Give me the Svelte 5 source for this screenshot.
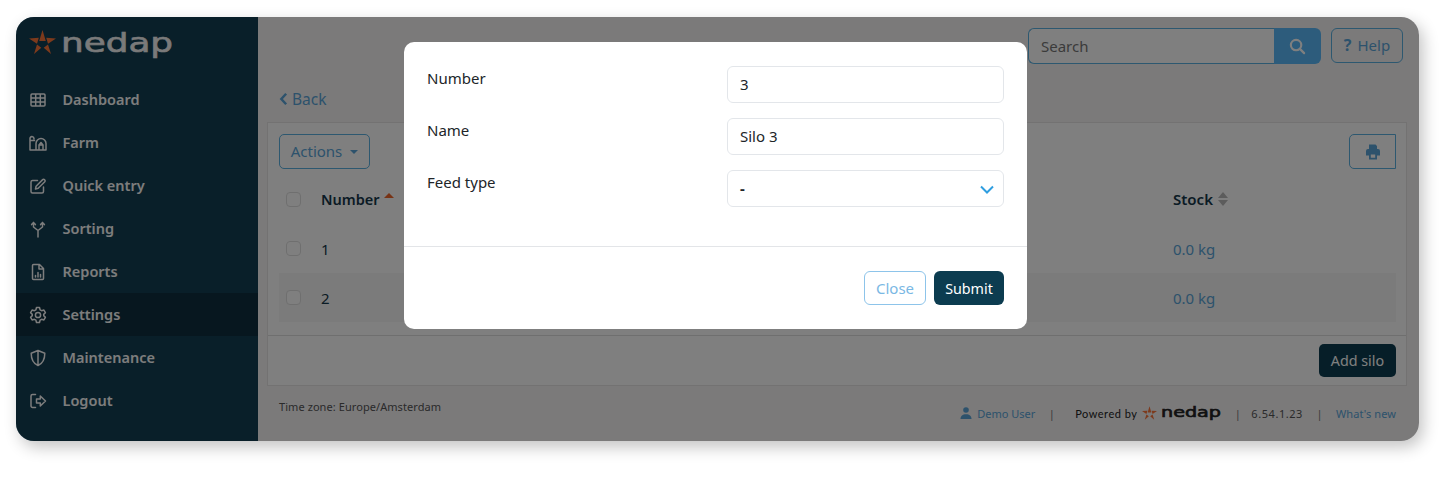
<script>
  const nav = [
    { label: 'Dashboard', d: 'M3 3h12a1 1 0 0 1 1 1v10a1 1 0 0 1-1 1H3a1 1 0 0 1-1-1V4a1 1 0 0 1 1-1zM2 7h14M2 11h14M6.700 3v12M11.300 3v12' },
    { label: 'Farm', d: 'M1 16V5a2.300 2.300 0 0 1 2-2.500A2.300 2.300 0 0 1 5 5M1 6.500h4.500M1 16h16V9.500a5 5 0 0 0-10 0V16M10 16v-5h4v5M10 11l2-2.500 2 2.500' },
    { label: 'Quick entry', d: 'M8.500 3.500H3.500A1.500 1.500 0 0 0 2 5v9.500A1.500 1.500 0 0 0 3.500 16H13a1.500 1.500 0 0 0 1.500-1.500V10M6.500 12l.6-2.800 6.600-6.600a1.200 1.200 0 0 1 1.700 0l.4.4a1.200 1.200 0 0 1 0 1.700l-6.600 6.600z' },
    { label: 'Sorting', d: 'M9 17v-6.500M9 10.500L4.500 7V2.500M9 10.500L13.500 7V2.500M2.600 4.600L4.500 2.500 6.400 4.600M11.600 4.600l1.900-2.100 1.900 2.100' },
    { label: 'Reports', d: 'M4.500 1.500h6l4 4v10a1 1 0 0 1-1 1h-9a1 1 0 0 1-1-1v-13a1 1 0 0 1 1-1zM10 1.500v4.500h4.500M6.500 14v-1.500M9 14v-4.500M11.500 14v-2.500' },
    { label: 'Settings', active: true, d: 'M7.500 1.500h3l.6 2.300 1.500.9 2.300-.6 1.500 2.600-1.700 1.700v1.200l1.700 1.700-1.500 2.600-2.300-.6-1.500.9-.6 2.300h-3l-.6-2.300-1.500-.9-2.300.6-1.500-2.600 1.700-1.700V8.400L1.600 6.700l1.500-2.600 2.300.6 1.500-.9zM9 6.400a2.600 2.600 0 1 0 0 5.200 2.600 2.600 0 0 0 0-5.200z' },
    { label: 'Maintenance', d: 'M9 1.500l6.800 2.700c0 6.300-2.200 10.300-6.800 12.300C4.400 14.500 2.200 10.500 2.200 4.200zM9 1.500v15' },
    { label: 'Logout', d: 'M6.500 2.500H3.500A1.500 1.500 0 0 0 2 4v10a1.500 1.500 0 0 0 1.500 1.500h3M7.500 7h3.800V4l5.200 5-5.200 5v-3H7.500z' }
  ];
  const star = 'M13.500 0L16.800 11H10.200zM0 8.500L9.800 7.800 8 13.800zM27 8.500L17.200 7.800 19 13.800zM5 24L8 14.500 12.300 17.700zM22 24L19 14.500 14.700 17.700z';
</script>

<div class="shell">
  <aside class="sidebar">
    <div class="brand">
      <svg class="star" viewBox="0 0 27 24" aria-hidden="true"><path d={star} /></svg>
      <svg class="word" viewBox="0 0 112 28" aria-hidden="true"><text x="0" y="21" textLength="112" lengthAdjust="spacingAndGlyphs">nedap</text></svg>
    </div>
    <nav class="menu">
      {#each nav as item}
        <div class="item" class:active={item.active}>
          <svg viewBox="0 0 18 18" class="ico" aria-hidden="true"><path d={item.d} /></svg>
          <span>{item.label}</span>
        </div>
      {/each}
    </nav>
  </aside>

  <main class="main">
    <header class="top">
      <div class="search">
        <div class="search-input">Search</div>
        <div class="search-btn">
          <svg viewBox="0 0 18 18" aria-hidden="true"><circle cx="7.500" cy="7.500" r="5.500" /><path d="M11.500 11.500L16 16" /></svg>
        </div>
      </div>
      <div class="help"><b>?</b><span>Help</span></div>
    </header>

    <div class="back">
      <svg viewBox="0 0 10 16" aria-hidden="true"><path d="M8 2L2.500 8 8 14" /></svg>
      <span>Back</span>
    </div>

    <section class="card">
      <div class="tools">
        <div class="actions">Actions <i class="caret"></i></div>
        <div class="print">
          <svg viewBox="0 0 16 16" aria-hidden="true"><path d="M4 0.500h6.500L12 2V5H4zM1 7a2 2 0 0 1 2-2h10a2 2 0 0 1 2 2v4.500h-3V15.500H4v-4H1zM5.800 10.500v3.200h4.400v-3.200z" fill-rule="evenodd" /></svg>
        </div>
      </div>
      <div class="table">
        <div class="row head">
          <i class="check"></i>
          <span class="num">Number <i class="sort-up"></i></span>
          <span class="stock">Stock <span class="sort-both"><i></i><i></i></span></span>
        </div>
        <div class="row body">
          <i class="check"></i>
          <span>1</span>
          <span class="link">0.0 kg</span>
        </div>
        <div class="row body striped">
          <i class="check"></i>
          <span>2</span>
          <span class="link">0.0 kg</span>
        </div>
      </div>
      <div class="card-foot"><div class="add">Add silo</div></div>
    </section>

    <footer class="foot">
      <span class="tz">Time zone: Europe/Amsterdam</span>
      <div class="meta">
        <svg class="user" viewBox="0 0 12 12" aria-hidden="true"><circle cx="6" cy="3" r="2.800" /><path d="M0.500 12c0-3 2-4.800 5.500-4.800s5.500 1.800 5.500 4.800z" /></svg>
        <span class="link">Demo User</span>
        <span class="sep s1">|</span>
        <span class="powered">Powered by</span>
        <svg class="fstar" viewBox="0 0 27 24" aria-hidden="true"><path d={star} /></svg>
        <svg class="fword" viewBox="0 0 112 28" aria-hidden="true"><text x="0" y="21" textLength="112" lengthAdjust="spacingAndGlyphs">nedap</text></svg>
        <span class="sep s2">|</span>
        <span class="ver">6.54.1.23</span>
        <span class="sep s3">|</span>
        <span class="link new">What's new</span>
      </div>
    </footer>
  </main>

  <div class="overlay">
    <div class="modal">
      <div class="modal-body">
        <div class="field"><span class="lab">Number</span><div class="control">3</div></div>
        <div class="field"><span class="lab">Name</span><div class="control">Silo 3</div></div>
        <div class="field"><span class="lab">Feed type</span>
          <div class="control select"><b>-</b>
            <svg viewBox="0 0 14 9" aria-hidden="true"><path d="M1 1.500L7 7.500 13 1.500" /></svg>
          </div>
        </div>
      </div>
      <div class="modal-foot">
        <div class="btn close">Close</div>
        <div class="btn submit">Submit</div>
      </div>
    </div>
  </div>
</div>

<style>
  :global(body) { background: #fff; }
  .shell {
    position: relative;
    display: flex;
    width: 1403px;
    height: 424px;
    margin: 17px 0 36px 16px;
    border-radius: 18px;
    overflow: hidden;
    box-shadow: 4px 6px 16px rgba(0, 0, 0, 0.24);
    font-family: "Noto Sans", "Open Sans", sans-serif;
    font-size: 15px;
    color: #15374a;
  }
  .sidebar {
    flex: 0 0 242px;
    background: #133e52;
    color: #fafafa;
    display: flex;
    flex-direction: column;
  }
  .brand { height: 61px; box-sizing: border-box; display: flex; align-items: flex-start; padding: 13px 0 0 13px; }
  .star { width: 27px; height: 24px; fill: #fa7438; }
  .word { width: 112px; height: 28px; margin: 1px 0 0 5px; overflow: visible; }
  .word text { font: 400 27px "DejaVu Sans", sans-serif; fill: #f4f4f4; stroke: #f4f4f4; stroke-width: 0.6; }
  .menu { display: flex; flex-direction: column; }
  .item { height: 43px; display: flex; align-items: center; gap: 16px; padding-left: 13px; font-weight: 600; font-size: 14.500px; }
  .item span { margin: -2px 0 0 -0.5px; }
  .item.active { background: #0f2f3e; }
  .ico { width: 18px; height: 18px; fill: none; stroke: #fafafa; stroke-width: 1.500; stroke-linejoin: round; stroke-linecap: round; }

  .main { flex: 1; background: #f6f4f5; display: flex; flex-direction: column; padding: 11px 12px 0 9px; min-width: 0; }
  .top { display: flex; justify-content: flex-end; gap: 10px; height: 36px; padding-right: 4px; }
  .search { display: flex; width: 293px; height: 36px; }
  .search-input { flex: 1; border: 1px solid #5ab0e0; border-right: 0; border-radius: 6px 0 0 6px; background: #fff; color: #777; padding: 0 12px; line-height: 34px; }
  .search-btn { width: 47px; background: #5ab9f9; border-radius: 0 6px 6px 0; display: flex; align-items: center; justify-content: center; }
  .search-btn svg { width: 17px; height: 17px; fill: none; stroke: #fff; stroke-width: 2.300; stroke-linecap: round; }
  .help { width: 72px; height: 35px; box-sizing: border-box; border: 1px solid #5ab0e0; border-radius: 6px; color: #5aa5d8; display: flex; align-items: center; justify-content: center; gap: 6px; padding-bottom: 2px; }
  .help b { font-weight: 700; font-size: 16px; }
  .back { height: 58px; box-sizing: border-box; display: flex; align-items: center; gap: 4px; padding: 12px 0 0 12px; color: #5aa5d8; font-size: 15.500px; }
  .back svg { width: 9px; height: 14px; fill: none; stroke: #5aa5d8; stroke-width: 2.800; }
  .card { background: #fff; border: 1px solid #e6e4e5; height: 264px; box-sizing: border-box; padding: 11px 10px 0 11px; display: flex; flex-direction: column; }
  .tools { display: flex; justify-content: space-between; height: 35px; }
  .actions { width: 91px; box-sizing: border-box; border: 1px solid #5ab0e0; border-radius: 5px; color: #5aa5d8; display: flex; align-items: center; justify-content: center; gap: 8px; padding-bottom: 2px; }
  .caret { width: 0; height: 0; border: 4px solid transparent; border-top-color: #5aa5d8; border-bottom: 0; margin-top: 2px; }
  .print { width: 47px; box-sizing: border-box; border: 1px solid #5ab0e0; border-radius: 5px 0 0 5px; display: flex; align-items: center; justify-content: center; }
  .print svg { width: 16px; height: 16px; fill: #5aa5d8; }
  .table { margin-top: 5px; flex: 1; }
  .row { display: grid; grid-template-columns: 42px 852px 1fr; align-items: center; }
  .head { height: 50px; font-weight: 600; }
  .body { height: 49px; }
  .striped { background: #f6f6f6; }
  .check { width: 15px; height: 15px; margin-left: 7px; box-sizing: border-box; border: 1px solid #dedede; border-radius: 4px; background: #fff; }
  .num { display: inline-flex; align-items: center; gap: 4px; font-size: 14.500px; }
  .sort-up { width: 0; height: 0; border: 5.500px solid transparent; border-bottom: 5.500px solid #f0662a; border-top: 0; margin-bottom: 7px; }
  .stock { display: inline-flex; align-items: center; gap: 5px; }
  .sort-both { display: inline-flex; flex-direction: column; gap: 2px; }
  .sort-both i { width: 0; height: 0; border: 5.500px solid transparent; border-bottom: 6px solid #b8b8b8; border-top: 0; }
  .sort-both i + i { border-bottom: 0; border-top: 6px solid #b8b8b8; }
  .link { color: #5aa5d8; }
  .card-foot { height: 50px; border-top: 1px solid #dedede; margin: 0 -10px 0 -11px; padding: 8px 10px 0 11px; box-sizing: border-box; display: flex; justify-content: flex-end; }
  .add { width: 77px; height: 33px; background: #0c3c50; color: #fff; border-radius: 5px; display: flex; align-items: center; justify-content: center; font-size: 14.300px; }
  .foot { display: flex; justify-content: space-between; padding: 13px 11px 0 12px; font-size: 11px; color: #555; }
  .tz { letter-spacing: 0.07px; }
  .meta { display: flex; align-items: center; margin-top: 7px; height: 14px; }
  .user { width: 12px; height: 12px; fill: #5aa5d8; margin-right: 5px; }
  .sep { width: 3px; display: flex; justify-content: center; color: #777; }
  .s1 { margin: 0 22px 0 15px; }
  .s2 { margin: 0 12px 0 15px; }
  .s3 { margin: 0 15px; }
  .powered { font-family: "Lato", sans-serif; color: #222; letter-spacing: 0.5px; margin-right: 5px; }
  .ver { letter-spacing: 0.55px; }
  .new { letter-spacing: 0.1px; }
  .fstar { width: 15px; height: 14px; fill: #fa7438; margin-right: 4px; }
  .fword { width: 60px; height: 15px; overflow: visible; }
  .fword text { font: 400 27px "DejaVu Sans", sans-serif; fill: #222; stroke: #222; stroke-width: 1.200; }

  .overlay { position: absolute; inset: 0; background: rgba(0, 0, 0, 0.5); padding: 25px 0 0 388px; }
  .modal { width: 623px; height: 287px; background: #fff; border-radius: 10px; color: #212529; display: flex; flex-direction: column; }
  .modal-body { height: 205px; padding: 24px 23px 0; box-sizing: border-box; border-bottom: 1px solid #e3e5e8; display: flex; flex-direction: column; gap: 15px; }
  .field { display: grid; grid-template-columns: 300px 1fr; height: 37px; }
  .lab { line-height: 24px; }
  .control { position: relative; border: 1px solid #e3e6ea; border-radius: 6px; padding: 0 12px; line-height: 35px; }
  .select svg { position: absolute; right: 9px; top: 14px; width: 14px; height: 9px; fill: none; stroke: #2f9ee0; stroke-width: 2; }
  .modal-foot { flex: 1; display: flex; justify-content: flex-end; gap: 8px; padding: 24px 23px 0; }
  .btn { height: 34px; box-sizing: border-box; border-radius: 6px; display: flex; align-items: center; justify-content: center; }
  .close { width: 62px; border: 1px solid #8dc4ea; color: #7ab8e4; }
  .submit { width: 70px; background: #0c3c50; color: #fff; font-size: 14.300px; }
</style>
